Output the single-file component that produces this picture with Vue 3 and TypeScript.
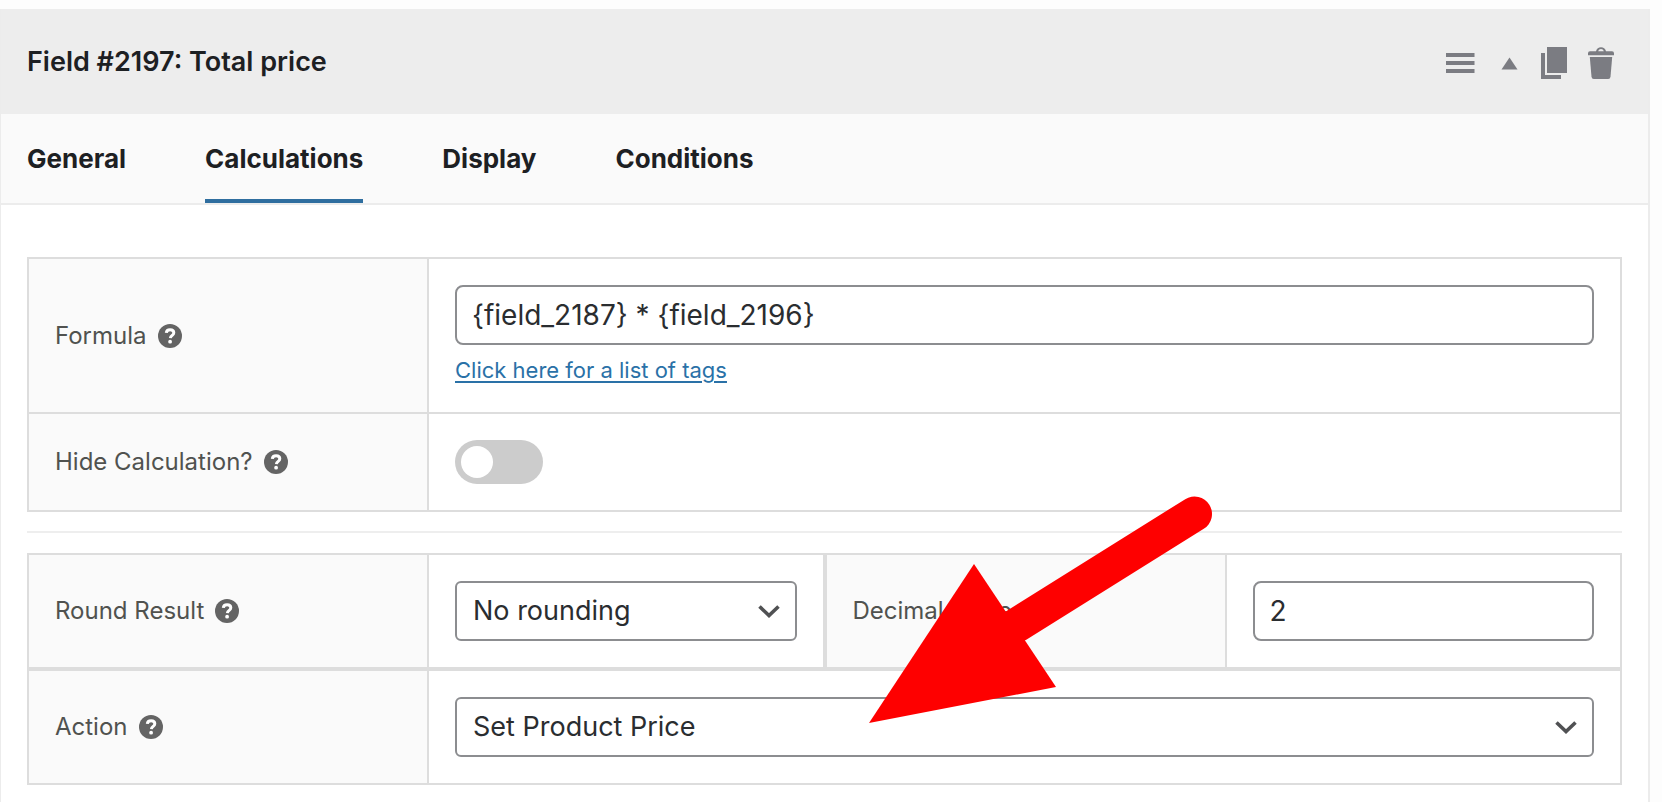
<script setup lang="ts">
import { defineComponent, h, ref } from 'vue'

const tabs = ['General', 'Calculations', 'Display', 'Conditions']
const activeTab = ref('Calculations')
const formula = ref('{field_2187} * {field_2196}')
const hidden = ref(false)
const rounding = ref('No rounding')
const decimals = ref(2)
const action = ref('Set Product Price')

const HelpIcon = defineComponent({
  setup: () => () =>
    h('svg', { width: 24, height: 24, viewBox: '0 0 24 24', 'aria-hidden': 'true' }, [
      h('circle', { cx: 12, cy: 12, r: 12, fill: '#646464' }),
      h('path', {
        d: 'M8.3 8.8C8.5 6.8 10 5.7 12.1 5.7C14.3 5.7 15.8 6.9 15.8 8.8C15.8 11.4 12.6 11.3 12.4 14.1',
        fill: 'none',
        stroke: '#fff',
        'stroke-width': 3,
      }),
      h('circle', { cx: 12.1, cy: 17.7, r: 1.9, fill: '#fff' }),
    ]),
})

const Chevron = defineComponent({
  setup: () => () =>
    h('svg', { width: 22, height: 14, viewBox: '0 0 22 14', 'aria-hidden': 'true' }, [
      h('path', { d: 'M1.5 1.5L11 10.5L20.5 1.5', fill: 'none', stroke: '#505153', 'stroke-width': 3.6 }),
    ]),
})
</script>

<template>
  <main class="page">
    <section class="panel">
      <header class="head">
        <h1>Field #2197: Total price</h1>
        <div class="actions">
          <button type="button" aria-label="Move field">
            <svg width="32" height="32" viewBox="0 0 32 32">
              <path d="M2 6h28.500v4h-28.500zM2 14h28.500v4h-28.500zM2 22h28.500v4h-28.500z" />
            </svg>
          </button>
          <button type="button" aria-label="Collapse field">
            <svg width="32" height="32" viewBox="0 0 32 32">
              <path d="M18.500 10.500L26.500 22.500H10.500Z" />
            </svg>
          </button>
          <button type="button" aria-label="Duplicate field">
            <svg width="32" height="32" viewBox="0 0 32 32">
              <path d="M9 0h20v26H9zM3 6h4v22h16v4H3z" />
            </svg>
          </button>
          <button type="button" aria-label="Delete field">
            <svg width="32" height="32" viewBox="0 0 32 32">
              <path
                fill-rule="evenodd"
                d="M11 4.200C11.600 1.700 13.600 0.200 16 0.200S20.400 1.700 21 4.200H27Q29 4.200 29 6.200V8.200H3V6.200Q3 4.200 5 4.200ZM13.200 4.200H18.800C18.300 2.800 17.300 2.100 16 2.100S13.700 2.800 13.200 4.200Z"
              />
              <path d="M4.800 10H27.200L25.500 29.800Q25.300 32 23.200 32H8.800Q6.700 32 6.500 29.800Z" />
            </svg>
          </button>
        </div>
      </header>

      <nav class="tabs" role="tablist">
        <button
          v-for="tab in tabs"
          :key="tab"
          type="button"
          role="tab"
          :aria-selected="tab === activeTab"
          :class="['tab', { active: tab === activeTab }]"
          @click="activeTab = tab"
        >
          {{ tab }}
        </button>
      </nav>

      <form class="body" @submit.prevent>
        <div class="group">
          <div class="field">
            <label class="name" for="formula">Formula <HelpIcon /></label>
            <div class="value">
              <input id="formula" v-model="formula" class="control" type="text" />
              <a class="hint" href="#tags">Click here for a list of tags</a>
            </div>
          </div>
          <div class="field joined">
            <label class="name" for="hide">Hide Calculation? <HelpIcon /></label>
            <div class="value">
              <input id="hide" v-model="hidden" class="toggle" type="checkbox" />
            </div>
          </div>
        </div>

        <hr />

        <div class="group">
          <div class="pair">
            <div class="field">
              <label class="name" for="rounding">Round Result <HelpIcon /></label>
              <div class="value">
                <div class="select">
                  <select id="rounding" v-model="rounding" class="control">
                    <option>No rounding</option>
                    <option>Round up</option>
                    <option>Round down</option>
                  </select>
                  <Chevron class="chevron" />
                </div>
              </div>
            </div>
            <div class="field">
              <label class="name" for="decimals">Decimal places <HelpIcon /></label>
              <div class="value">
                <input id="decimals" v-model="decimals" class="control" type="number" />
              </div>
            </div>
          </div>
          <div class="field">
            <label class="name" for="action">Action <HelpIcon /></label>
            <div class="value">
              <div class="select">
                <select id="action" v-model="action" class="control">
                  <option>Set Product Price</option>
                  <option>Add to price</option>
                </select>
                <Chevron class="chevron" />
              </div>
            </div>
            <svg class="pointer" width="344" height="228" viewBox="0 0 344 228" aria-hidden="true">
              <path d="M148 130L325.500 19" stroke="#fe0000" stroke-width="35" stroke-linecap="round" />
              <path d="M0 228L105 69L187 192Z" fill="#fe0000" />
            </svg>
          </div>
        </div>
      </form>
    </section>
  </main>
</template>

<style>
body {
  margin: 0;
  background: #fdfdfd;
}
</style>

<style scoped>
* {
  box-sizing: border-box;
}

.page {
  min-height: 100vh;
  display: flex;
  padding: 9px 12px 0 0;
  font-family: Inter, 'Liberation Sans', sans-serif;
  color: #1d2023;
}

.panel {
  flex: 1;
  min-width: 0;
  background: #fff;
  border: solid #ececec;
  border-width: 0 2px 0 1px;
}

.head {
  display: flex;
  align-items: center;
  justify-content: space-between;
  height: 105px;
  padding: 0 24px 0 26px;
  background: #ededed;
}

h1 {
  margin: 0;
  font-size: 27px;
  line-height: 32px;
  font-weight: 600;
}

.actions {
  display: flex;
  padding-top: 2px;
}

.actions button {
  width: 47px;
  height: 40px;
  display: grid;
  place-items: center;
  padding: 0;
  border: 0;
  background: none;
  fill: #7b7c82;
  cursor: pointer;
}

.tabs {
  display: flex;
  gap: 79px;
  padding: 0 26px;
  background: #fafafa;
  border-bottom: 2px solid #ececec;
}

.tab {
  height: 89px;
  padding: 4px 0 0;
  border: 0;
  border-bottom: 4px solid transparent;
  background: none;
  font: 700 26px/32px Inter, 'Liberation Sans', sans-serif;
  color: inherit;
  cursor: pointer;
}

.tab.active {
  border-bottom-color: #2f6e9f;
}

.body {
  padding: 52px 26px 17px;
}

.field {
  position: relative;
  display: flex;
  flex: 1;
  min-width: 0;
  border: 2px solid #dddddd;
}

.joined {
  border-top: 0;
}

.pair {
  display: flex;
}

.name {
  flex: none;
  width: 400px;
  display: flex;
  align-items: center;
  gap: 11px;
  padding: 0 26px;
  border-right: 2px solid #dddddd;
  background: #fafafa;
  font-size: 24px;
  line-height: 32px;
  color: #50524f;
}

.value {
  flex: 1;
  min-width: 0;
  padding: 26px;
}

.control {
  display: block;
  width: 100%;
  height: 60px;
  margin: 0;
  padding: 0 15px;
  border: 2px solid #8c8d90;
  border-radius: 8px;
  background: #fff;
  font: 400 28px/36px Inter, 'Liberation Sans', sans-serif;
  color: #2a2d30;
  appearance: none;
}

select.control {
  padding: 0 16px;
  border-radius: 6px;
  font-size: 27px;
}

.control[type='number'] {
  appearance: textfield;
}

.hint {
  display: block;
  width: max-content;
  margin-top: 10px;
  font-size: 22px;
  line-height: 31px;
  color: #2a71a7;
  text-decoration-thickness: 2px;
  text-underline-offset: 3px;
}

.toggle {
  display: block;
  width: 88px;
  height: 44px;
  margin: 0;
  padding: 6px;
  border-radius: 22px;
  background: #cccccc;
  appearance: none;
}

.toggle::before {
  content: '';
  display: block;
  width: 32px;
  height: 32px;
  border-radius: 50%;
  background: #fff;
}

.toggle:checked {
  background: #2f6e9f;
}

.toggle:checked::before {
  margin-left: auto;
}

hr {
  margin: 19px 0 20px;
  border: 0;
  border-top: 2px solid #eeeeee;
}

.select {
  position: relative;
}

.chevron {
  position: absolute;
  right: 17px;
  top: 24px;
  pointer-events: none;
}

.pointer {
  position: absolute;
  left: 840px;
  bottom: 60px;
  pointer-events: none;
}
</style>
